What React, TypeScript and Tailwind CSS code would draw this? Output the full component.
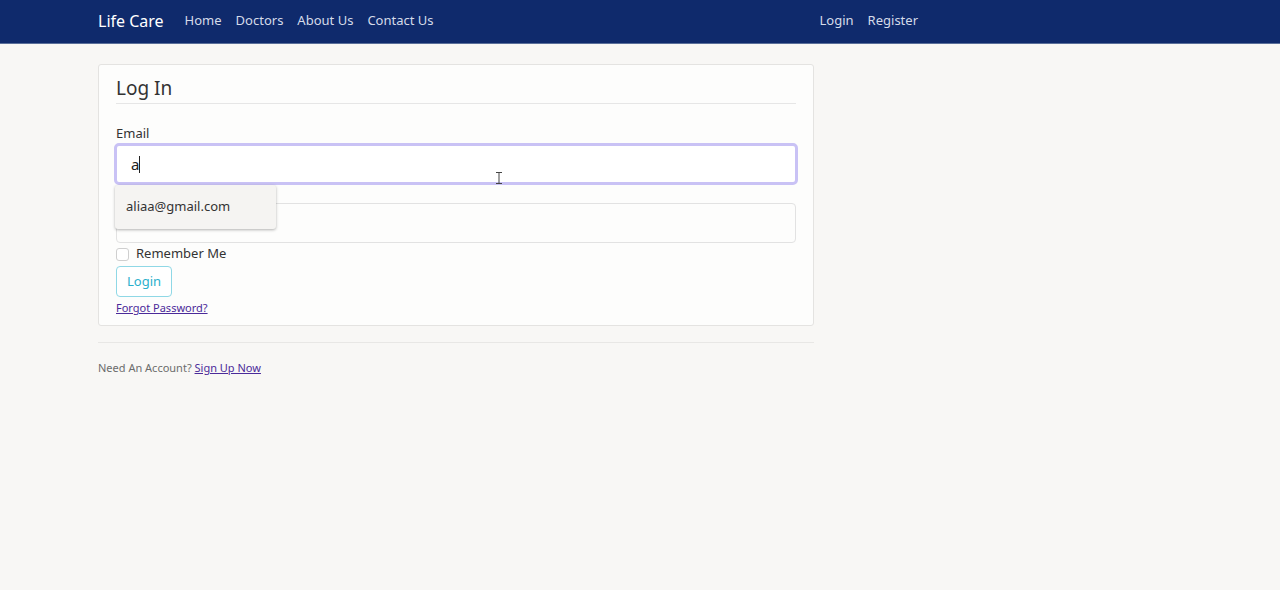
import React from "react";

export default function App() {
  return (
    <div className="min-h-[590px] bg-[#f8f7f5] text-[#333]" style={{ fontFamily: '"Noto Sans", "Open Sans", sans-serif' }}>
      <nav className="h-[44px] bg-[#0f2a6c] border-b border-[#5a6f9a] flex items-center">
        <div className="w-[820px] ml-[98px] flex items-center justify-between -mt-[2px]">
          <div className="flex items-center">
            <span className="text-[16px] text-white mr-[21px]">Life Care</span>
            <div className="flex items-center gap-[14px] text-[13px] text-[#d5dbe9]">
              <span>Home</span>
              <span>Doctors</span>
              <span>About Us</span>
              <span>Contact Us</span>
            </div>
          </div>
          <div className="flex items-center gap-[14px] text-[13px] text-[#d5dbe9]">
            <span>Login</span>
            <span>Register</span>
          </div>
        </div>
      </nav>

      <div className="ml-[98px] w-[716px] pt-[20px]">
        <div className="bg-[#fdfdfc] border border-[#e4e3e1] rounded-[3px] px-[17px] pt-[11px] pb-[9px]">
          <h1 className="text-[19px] text-[#333] leading-[24px] pb-[3px] border-b border-[#e6e6e6]">Log In</h1>
          <label className="block text-[13px] text-[#333] mt-[20px] leading-[18px]">Email</label>
          <div className="relative mt-[1px] -mx-[2px]">
            <div className="h-[42px] rounded-[5px] border-[3px] border-[#c9c2f5] bg-white flex items-center pl-[14px]">
              <span className="text-[15px] text-[#222]">a</span>
              <span className="w-[1px] h-[17px] bg-[#222]"></span>
            </div>
            <div className="absolute left-[382px] top-[29px] text-[#444]">
              <svg width="6" height="12" viewBox="0 0 6 12"><path d="M0 0.5h6M3 0.5v11M0 11.5h6" stroke="#444" strokeWidth="1" fill="none" /></svg>
            </div>
            <div className="absolute left-[1px] top-[42px] w-[161px] h-[44px] bg-[#f5f4f2] rounded-[3px] shadow-[0_1px_3px_rgba(0,0,0,0.3)] flex items-center pl-[11px] text-[13px] text-[#333] z-10">
              aliaa@gmail.com
            </div>
          </div>
          <div className="mt-[18px] h-[40px] rounded-[4px] border border-[#e2e2e2] bg-[#fdfdfc]"></div>
          <div className="flex items-center mt-[1px] h-[20px]">
            <span className="w-[13px] h-[13px] rounded-[3px] border border-[#cfcfcf] bg-white"></span>
            <span className="ml-[7px] text-[13px] text-[#333]">Remember Me</span>
          </div>
          <button className="block mt-[2px] h-[31px] px-[10px] rounded-[4px] border border-[#8fd8e6] text-[13px] text-[#2ab0cc] bg-white">Login</button>
          <div className="mt-[1px] leading-[16px]">
            <a className="text-[11px] text-[#4b2a9a] underline">Forgot Password?</a>
          </div>
        </div>
        <div className="mt-[16px] border-t border-[#e8e7e5]"></div>
        <div className="mt-[17px] text-[11px] text-[#6c6c6c]">
          Need An Account? <a className="text-[#4b2a9a] underline">Sign Up Now</a>
        </div>
      </div>
    </div>
  );
}
